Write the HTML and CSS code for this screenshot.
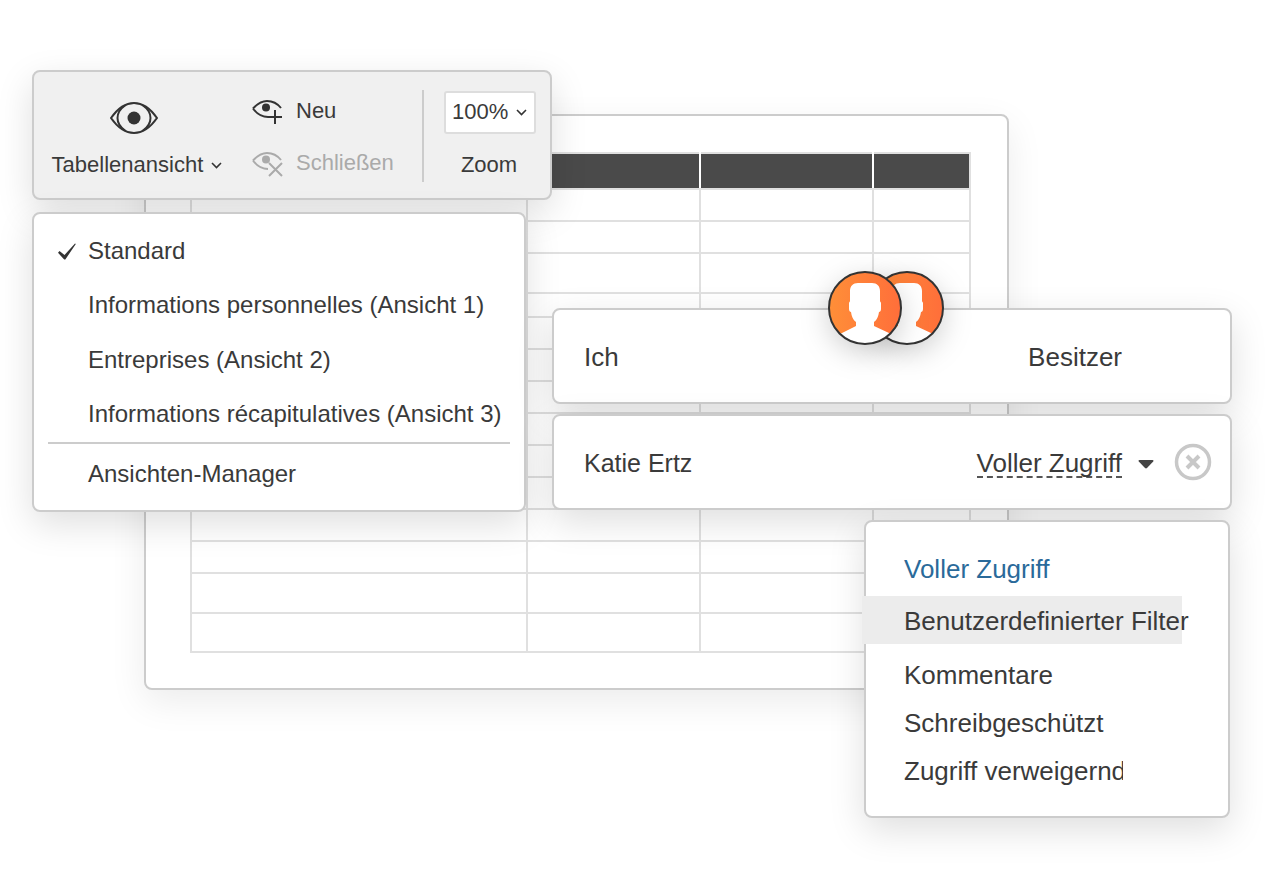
FILE: index.html
```html
<!DOCTYPE html>
<html lang="de">
<head>
    <meta charset="UTF-8">
    <title>Tabellenansicht</title>
    <link rel="stylesheet" href="styles.css">
</head>
<body>
<div class="stage">

    <!-- spreadsheet in the background -->
    <div class="sheet">
        <table class="grid">
            <colgroup><col class="c1"><col class="c2"><col class="c3"><col class="c4"></colgroup>
            <tr class="head"><th></th><th></th><th></th><th></th></tr>
            <tr><td></td><td></td><td></td><td></td></tr>
            <tr><td></td><td></td><td></td><td></td></tr>
            <tr class="tall"><td></td><td></td><td></td><td></td></tr>
            <tr class="short"><td></td><td></td><td></td><td></td></tr>
            <tr><td></td><td></td><td></td><td></td></tr>
            <tr><td></td><td></td><td></td><td></td></tr>
            <tr><td></td><td></td><td></td><td></td></tr>
            <tr><td></td><td></td><td></td><td></td></tr>
            <tr><td></td><td></td><td></td><td></td></tr>
            <tr><td></td><td></td><td></td><td></td></tr>
            <tr><td></td><td></td><td></td><td></td></tr>
            <tr><td></td><td></td><td></td><td></td></tr>
            <tr class="tall"><td></td><td></td><td></td><td></td></tr>
            <tr class="last"><td></td><td></td><td></td><td></td></tr>
        </table>
    </div>

    <!-- toolbar -->
    <div class="toolbar">
        <div class="tb-view">
            <svg class="eye-big" width="48" height="32" viewBox="0 0 48 32" fill="none" stroke="#333" stroke-width="2">
                <path d="M1 16C8 6 15 1 24 1S40 6 47 16C40 26 33 31 24 31S8 26 1 16Z"/>
                <path d="M15 3.500C10 7 7.500 11 7.500 16S10 25 15 28.500M33 3.500C38 7 40.500 11 40.500 16S38 25 33 28.500"/>
                <circle cx="24" cy="16" r="6.500" fill="#333" stroke="none"/>
            </svg>
            <div class="tb-label">Tabellenansicht
                <svg class="chev" width="11" height="7" viewBox="0 0 11 7" fill="none" stroke="#333" stroke-width="1.6"><path d="M1 1l4.500 4.500L10 1"/></svg>
            </div>
        </div>
        <div class="tb-actions">
            <div class="tb-action">
                <svg width="32" height="26" viewBox="0 0 32 26" fill="none" stroke="#333" stroke-width="2">
                    <path d="M1 8.500C6 3 11 1 15 1C20 1 25 3 29 8"/>
                    <path d="M1 8.500C5 14 10 17 16 17"/>
                    <circle cx="14" cy="7.500" r="4" fill="#333" stroke="none"/>
                    <path d="M23 10v14M16 17h14"/>
                </svg>
                <span>Neu</span>
            </div>
            <div class="tb-action off">
                <svg width="32" height="26" viewBox="0 0 32 26" fill="none" stroke="#aaa" stroke-width="2">
                    <path d="M1 8.500C6 3 11 1 15 1C20 1 25 3 29 8"/>
                    <path d="M1 8.500C5 14 10 17 16 17"/>
                    <circle cx="14" cy="7.500" r="4" fill="#aaa" stroke="none"/>
                    <path d="M17 11l13 13M30 11L17 24"/>
                </svg>
                <span>Schließen</span>
            </div>
        </div>
        <div class="tb-divider"></div>
        <div class="tb-zoom">
            <div class="zoom-select">100%
                <svg class="chev" width="11" height="7" viewBox="0 0 11 7" fill="none" stroke="#333" stroke-width="1.6"><path d="M1 1l4.500 4.500L10 1"/></svg>
            </div>
            <div class="tb-label">Zoom</div>
        </div>
    </div>

    <!-- view menu -->
    <div class="view-menu">
        <div class="view-item">
            <svg class="check" width="18" height="17" viewBox="0 0 18 17"><path d="M0 9.800L1.500 8L6.500 12L17 .5L17.800 1.100L7.300 16.500H6.200Z" fill="#333"/></svg>
            Standard
        </div>
        <div class="view-item">Informations personnelles (Ansicht 1)</div>
        <div class="view-item">Entreprises (Ansicht 2)</div>
        <div class="view-item">Informations récapitulatives (Ansicht 3)</div>
        <div class="view-sep"></div>
        <div class="view-item">Ansichten-Manager</div>
    </div>

    <!-- sharing -->
    <div class="share-row first">
        <span>Ich</span>
        <span>Besitzer</span>
    </div>
    <div class="share-row second">
        <span class="name">Katie Ertz</span>
        <span class="role">Voller Zugriff</span>
        <div class="share-actions">
            <svg class="caret" width="16" height="10" viewBox="0 0 16 10"><path d="M1.500 1h13c1 0 1.300.8.700 1.500L9 9c-.6.600-1.400.600-2 0L.8 2.500C.2 1.800.5 1 1.500 1z" fill="#444"/></svg>
            <svg width="38" height="38" viewBox="0 0 38 38" fill="none" stroke="#c8c8c8"><circle cx="19" cy="19" r="16.500" stroke-width="3.500"/><path d="M13 13l12 12M25 13L13 25" stroke-width="4"/></svg>
        </div>
    </div>

    <!-- avatars over the first row -->
    <svg class="avatar back" width="76" height="76" viewBox="0 0 76 76"><use href="#person"/></svg>
    <svg class="avatar front" width="76" height="76" viewBox="0 0 76 76">
        <defs>
            <linearGradient id="orange"><stop offset="0" stop-color="#ff8f38"/><stop offset="1" stop-color="#ff6e3a"/></linearGradient>
            <clipPath id="disc"><circle cx="38" cy="38" r="36"/></clipPath>
            <g id="person">
                <circle cx="38" cy="38" r="36" fill="url(#orange)"/>
                <path clip-path="url(#disc)" d="M31 13h14c5 0 8 3 8 8v10c0 1 1 1 1 2v6c0 2-1 3-2 3-.5 4-2 8-5 10v4l15 7 16 7v8H0v-8l15-7 14-7v-4c-3-2-4.500-6-5-10-1 0-2-1-2-3v-6c0-1 1-1 1-2V21c0-5 3-8 8-8z" fill="#fff"/>
                <circle cx="38" cy="38" r="36" fill="none" stroke="#333" stroke-width="2"/>
            </g>
        </defs>
        <use href="#person"/>
    </svg>

    <!-- access dropdown -->
    <div class="access-menu">
        <div class="access-item current">Voller Zugriff</div>
        <div class="access-item hover">Benutzerdefinierter Filter</div>
        <div class="access-item">Kommentare</div>
        <div class="access-item">Schreibgeschützt</div>
        <div class="access-item"><span class="cut">Zugriff verweigernd</span></div>
    </div>

</div>
</body>
</html>
```

FILE: styles.css
```css
html, body {
    margin: 0;
    background: #fff;
}
body {
    font-family: "Liberation Sans", Arial, sans-serif;
    color: #3a3a3a;
}
.stage {
    position: relative;
    width: 1280px;
    height: 880px;
    overflow: hidden;
}

/* free floating windows */
.sheet, .toolbar, .view-menu, .share-row, .access-menu {
    position: absolute;
    box-sizing: border-box;
    background: #fff;
    border: 2px solid #ccc;
    border-radius: 8px;
    box-shadow: 0 12px 36px rgba(0, 0, 0, .13);
}

.sheet {
    left: 144px;
    top: 114px;
    width: 865px;
    height: 576px;
    padding: 36px 0 0 44px;
    box-shadow: 0 12px 36px rgba(0, 0, 0, .08);
}
.grid {
    border-collapse: collapse;
    table-layout: fixed;
    width: 779px;
    height: 499px;
}
.grid td, .grid th {
    border: 2px solid #e0e0e0;
    padding: 0;
    height: 32px;
    box-sizing: border-box;
}
.c1 { width: 336px; }
.c2 { width: 173px; }
.c3 { width: 173px; }
.c4 { width: 97px; }
.grid tr.head th {
    height: 36px;
    background: #4a4a4a;
    border-right-color: #fff;
}
.grid tr.head th:last-child {
    border-right-color: #e0e0e0;
}
.grid tr.tall td { height: 40px; }
.grid tr.short td { height: 24px; }
.grid tr.last td { height: 39px; }

.toolbar {
    left: 32px;
    top: 70px;
    width: 520px;
    height: 130px;
    display: flex;
    background: #f0f0f0;
    font-size: 22px;
    z-index: 2;
}
.tb-view {
    width: 170px;
    margin-left: 18px;
    padding-top: 30px;
    display: flex;
    flex-direction: column;
    align-items: center;
}
.eye-big {
    display: block;
    margin-right: 6px;
}
.tb-label {
    line-height: 30px;
    margin-top: 16px;
    white-space: nowrap;
}
.tb-zoom .tb-label {
    margin-right: 2px;
}
.chev {
    vertical-align: 3px;
    margin-left: 2px;
}
.tb-actions {
    width: 170px;
    margin-left: 30px;
    padding-top: 24px;
    display: flex;
    flex-direction: column;
    gap: 22px;
}
.tb-action {
    display: flex;
    align-items: flex-start;
    gap: 12px;
    line-height: 30px;
    height: 30px;
}
.tb-action svg {
    margin-top: 4px;
    flex: none;
}
.tb-action.off {
    color: #aaa;
}
.tb-divider {
    width: 2px;
    height: 92px;
    margin-top: 18px;
    background: #ccc;
}
.tb-zoom {
    width: 92px;
    margin-left: 20px;
    padding-top: 19px;
    display: flex;
    flex-direction: column;
    align-items: center;
}
.zoom-select {
    box-sizing: border-box;
    flex: none;
    width: 92px;
    height: 43px;
    line-height: 37px;
    padding-left: 6px;
    background: #fff;
    border: 2px solid #ddd;
    border-radius: 3px;
    white-space: nowrap;
}

.view-menu {
    left: 32px;
    top: 212px;
    width: 494px;
    height: 300px;
    padding-top: 10px;
    font-size: 24px;
    z-index: 3;
}
.view-item {
    position: relative;
    height: 54.400px;
    line-height: 54.400px;
    padding-left: 54px;
    white-space: nowrap;
}
.check {
    position: absolute;
    left: 24px;
    top: 19px;
}
.view-sep {
    height: 2px;
    margin: 0 14px 3px;
    background: #ccc;
}

.share-row {
    left: 552px;
    width: 680px;
    height: 96px;
    display: grid;
    grid-template-columns: 1fr auto 108px;
    align-items: center;
    padding: 2px 0 0 30px;
    font-size: 26px;
    z-index: 4;
}
.share-row.first { top: 308px; }
.share-row.second { top: 414px; }
.name {
    font-size: 25px;
}
.role {
    border-bottom: 2px dashed #555;
    line-height: 26px;
    margin-top: 2px;
}
.share-actions {
    display: flex;
    align-items: center;
    gap: 20px;
    padding-left: 16px;
    margin-top: -2px;
}
.caret {
    margin-top: 4px;
}

.avatar {
    position: absolute;
    top: 270px;
    z-index: 5;
    filter: drop-shadow(0 8px 14px rgba(0, 0, 0, .18));
}
.avatar.back { left: 869px; }
.avatar.front { left: 827px; }

.access-menu {
    left: 864px;
    top: 520px;
    width: 366px;
    height: 298px;
    padding-top: 23px;
    font-size: 26px;
    z-index: 4;
}
.access-item {
    height: 48px;
    line-height: 48px;
    margin-left: -4px;
    width: 278px;
    padding-left: 42px;
    white-space: nowrap;
}
.access-item.current {
    color: #2a6a9a;
    margin-bottom: 3px;
}
.access-item.hover {
    background: #ececec;
    line-height: 50px;
    margin-bottom: 7px;
}
.cut {
    display: inline-block;
    width: 219px;
    overflow: hidden;
    vertical-align: top;
}
```
